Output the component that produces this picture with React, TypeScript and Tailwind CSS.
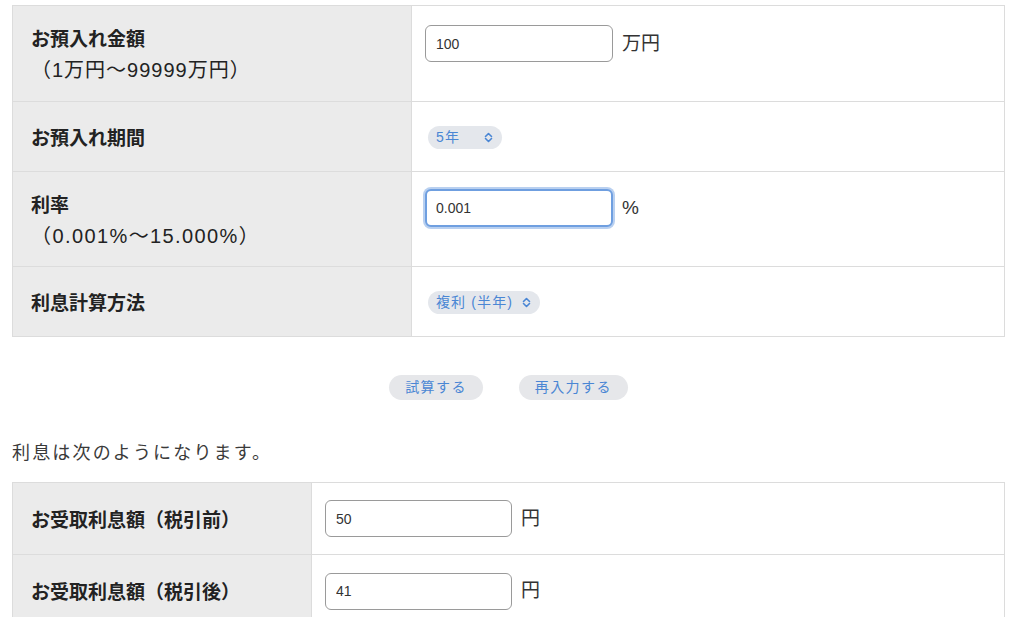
import type { ReactNode } from 'react';

const font = { fontFamily: '"Liberation Sans", "Noto Sans CJK JP", sans-serif' };

function UpDown() {
    return (
        <svg width="9" height="11" viewBox="0 0 9 11" fill="none" stroke="currentColor" strokeWidth="1.6" strokeLinecap="round" strokeLinejoin="round">
            <path d="M1.5 4.5 L4.5 1.5 L7.5 4.5" />
            <path d="M1.5 6.5 L4.5 9.5 L7.5 6.5" />
        </svg>
    );
}

function Field({ value, focused, width = 'w-[188px]' }: { value: string; focused?: boolean; width?: string }) {
    return (
        <input
            type="text"
            readOnly
            value={value}
            className={
                focused
                    ? `${width} h-[38px] rounded-[6px] border-[2px] border-[#6f9fe0] bg-white px-[9px] text-[14px] text-[#333] shadow-[0_0_0_2px_#b9d0f0] outline-none`
                    : `${width} h-[37px] rounded-[6px] border border-[#9a9a9a] bg-white px-[10px] text-[14px] text-[#333] outline-none`
            }
        />
    );
}

function Pill({ children, gap }: { children: ReactNode; gap: string }) {
    return (
        <div className={`flex h-[23px] items-center ${gap} rounded-full bg-[#e4e7ec] pl-[8px] pr-[9px] text-[14px] tracking-[0.08em] text-[#4a86d4]`}>
            <span>{children}</span>
            <UpDown />
        </div>
    );
}

function Unit({ children }: { children: ReactNode }) {
    return <span className="ml-[9px] text-[19px] leading-[24px] text-[#333]">{children}</span>;
}

function Row({
    label,
    labelW,
    height,
    top,
    children,
}: {
    label: ReactNode;
    labelW: string;
    height: string;
    top?: string;
    children: ReactNode;
}) {
    return (
        <div className={`flex ${height} border-b border-[#dcdcdc] last:border-b-0`}>
            <div className={`flex ${labelW} shrink-0 items-center bg-[#ebebeb] pl-[18px] text-[19px] font-bold leading-[31px] text-[#222]`}>
                <div className="pt-[3px]">{label}</div>
            </div>
            <div className={`flex flex-1 border-l border-[#dcdcdc] pl-[13px] ${top ? `items-start ${top}` : 'items-center'}`}>
                {children}
            </div>
        </div>
    );
}

function Button({ children }: { children: ReactNode }) {
    return (
        <button type="button" className="h-[25px] rounded-full bg-[#e6e7ea] px-[16px] text-[14px] tracking-[0.1em] text-[#4a86d4]">
            {children}
        </button>
    );
}

export default function App() {
    return (
        <div className="h-[617px] w-[1024px] overflow-hidden bg-white pt-[5px] pl-[12px]" style={font}>
            <div className="w-[993px] border border-[#dcdcdc]">
                <Row
                    label={
                        <>
                            お預入れ金額
                            <br />
                            <span className="text-[20px] font-normal tracking-[0.05em]">（1万円〜99999万円）</span>
                        </>
                    }
                    labelW="w-[398px]"
                    height="h-[96px]"
                    top="pt-[19px]"
                >
                    <div className="flex items-center">
                        <Field value="100" />
                        <Unit>万円</Unit>
                    </div>
                </Row>
                <Row label="お預入れ期間" labelW="w-[398px]" height="h-[70px]">
                    <div className="ml-[3px] mt-[2px]">
                        <Pill gap="gap-[24px]">5年</Pill>
                    </div>
                </Row>
                <Row
                    label={
                        <>
                            利率
                            <br />
                            <span className="text-[20px] font-normal tracking-[0.07em]">（0.001%〜15.000%）</span>
                        </>
                    }
                    labelW="w-[398px]"
                    height="h-[95px]"
                    top="pt-[17px]"
                >
                    <div className="flex items-center">
                        <Field value="0.001" focused />
                        <Unit>%</Unit>
                    </div>
                </Row>
                <Row label="利息計算方法" labelW="w-[398px]" height="h-[69px]">
                    <div className="ml-[3px] mt-[2px]">
                        <Pill gap="gap-[9px]">複利 (半年)</Pill>
                    </div>
                </Row>
            </div>

            <div className="flex w-[993px] justify-center gap-[36px] pt-[38px]">
                <Button>試算する</Button>
                <Button>再入力する</Button>
            </div>

            <p className="mt-[41px] text-[18px] leading-[25px] tracking-[0.12em] text-[#3a3a3a]">利息は次のようになります。</p>

            <div className="mt-[16px] w-[993px] border border-b-0 border-[#dcdcdc]">
                <Row label="お受取利息額（税引前）" labelW="w-[298px]" height="h-[72px]">
                    <div className="flex items-center">
                        <Field value="50" width="w-[187px]" />
                        <Unit>円</Unit>
                    </div>
                </Row>
                <Row label="お受取利息額（税引後）" labelW="w-[298px]" height="h-[72px]">
                    <div className="flex items-center">
                        <Field value="41" width="w-[187px]" />
                        <Unit>円</Unit>
                    </div>
                </Row>
            </div>
        </div>
    );
}
